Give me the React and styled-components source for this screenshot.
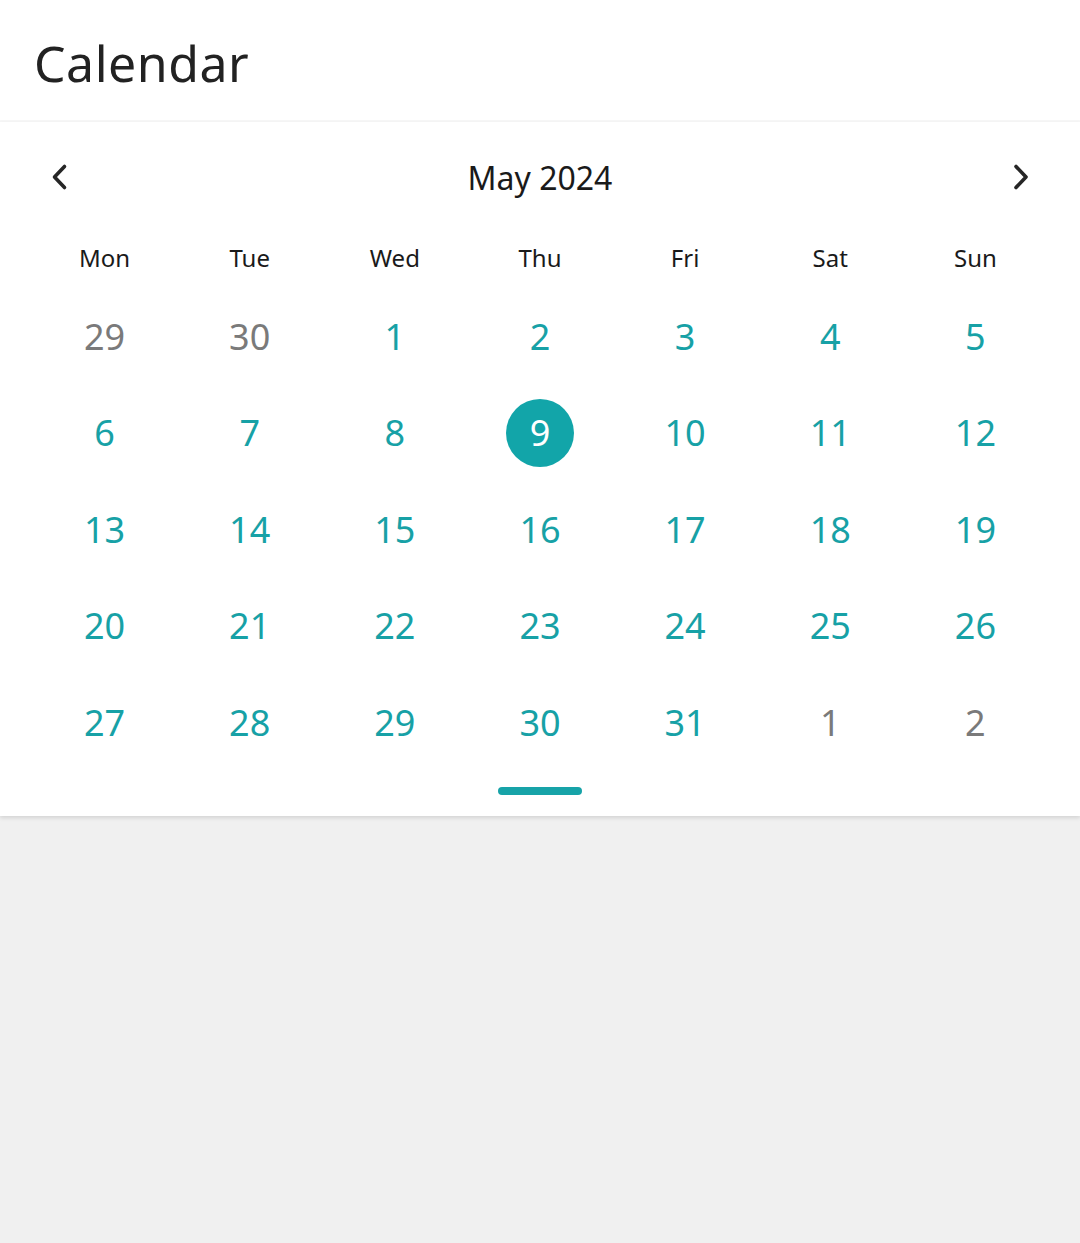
import React from 'react';
import styled, { createGlobalStyle } from 'styled-components';

const GlobalStyle = createGlobalStyle`
    html, body {
        margin: 0;
        padding: 0;
        background: #f0f0f0;
        font-family: "Noto Sans", "Open Sans", sans-serif;
    }
`;

const Page = styled.div`
    width: 1080px;
    height: 1243px;
    background: #f0f0f0;
`;

const Header = styled.header`
    height: 122px;
    box-sizing: border-box;
    background: #fff;
    display: flex;
    align-items: center;
    padding: 6px 0 0 34px;
    border-bottom: 2px solid #f7f7f7;
`;

const Title = styled.h1`
    margin: 0;
    font-size: 50px;
    font-weight: 400;
    color: #222;
    letter-spacing: 0.5px;
`;

const Panel = styled.section`
    background: #fff;
    padding: 0 32px 21px;
    box-shadow: 0 2px 4px rgba(0, 0, 0, 0.12);
    display: flex;
    flex-direction: column;
`;

const NavRow = styled.div`
    height: 110px;
    display: flex;
    align-items: center;
    justify-content: space-between;
    padding: 0 15px;
`;

const NavButton = styled.button`
    border: 0;
    background: none;
    padding: 0;
    width: 24px;
    height: 30px;
    display: flex;
    align-items: center;
    justify-content: center;
    cursor: pointer;
`;

const MonthLabel = styled.div`
    font-size: 32px;
    color: #1a1a1a;
`;

const Grid = styled.div`
    display: grid;
    grid-template-columns: repeat(7, 1fr);
`;

const WeekDay = styled.div`
    height: 56px;
    box-sizing: border-box;
    padding-bottom: 6px;
    display: flex;
    align-items: center;
    justify-content: center;
    font-size: 24px;
    color: #1a1a1a;
`;

const DayCell = styled.div`
    height: 96.5px;
    display: flex;
    align-items: center;
    justify-content: center;
`;

const DayNumber = styled.span`
    width: 68px;
    height: 68px;
    border-radius: 50%;
    display: flex;
    align-items: center;
    justify-content: center;
    font-size: 36px;
    color: ${({ $selected, $muted }) => ($selected ? '#fff' : $muted ? '#7a7a7a' : '#17a1a6')};
    background: ${({ $selected }) => ($selected ? '#12a5a9' : 'transparent')};
`;

const Handle = styled.div`
    align-self: center;
    width: 84px;
    height: 8px;
    border-radius: 4px;
    background: #17a3a8;
    margin-top: 16px;
`;

const Chevron = ({ dir }) => (
    <svg width="18" height="28" viewBox="0 0 18 28">
        <path
            d={dir === 'left' ? 'M14.5 3.5 L4.5 14 L14.5 24.5' : 'M4 3.5 L14 14 L4 24.5'}
            fill="none"
            stroke="#262626"
            strokeWidth="3.6"
            strokeLinecap="round"
            strokeLinejoin="round"
        />
    </svg>
);

const weekDays = ['Mon', 'Tue', 'Wed', 'Thu', 'Fri', 'Sat', 'Sun'];

const days = [
    { n: 29, muted: true },
    { n: 30, muted: true },
    ...Array.from({ length: 31 }, (_, i) => ({ n: i + 1 })),
    { n: 1, muted: true },
    { n: 2, muted: true },
];

const App = () => (
    <Page>
        <GlobalStyle />
        <Header>
            <Title>Calendar</Title>
        </Header>
        <Panel>
            <NavRow>
                <NavButton aria-label="Previous month">
                    <Chevron dir="left" />
                </NavButton>
                <MonthLabel>May 2024</MonthLabel>
                <NavButton aria-label="Next month">
                    <Chevron dir="right" />
                </NavButton>
            </NavRow>
            <Grid>
                {weekDays.map((d) => (
                    <WeekDay key={d}>{d}</WeekDay>
                ))}
                {days.map((d, i) => (
                    <DayCell key={i}>
                        <DayNumber $muted={d.muted} $selected={!d.muted && d.n === 9}>
                            {d.n}
                        </DayNumber>
                    </DayCell>
                ))}
            </Grid>
            <Handle />
        </Panel>
    </Page>
);

export default App;
